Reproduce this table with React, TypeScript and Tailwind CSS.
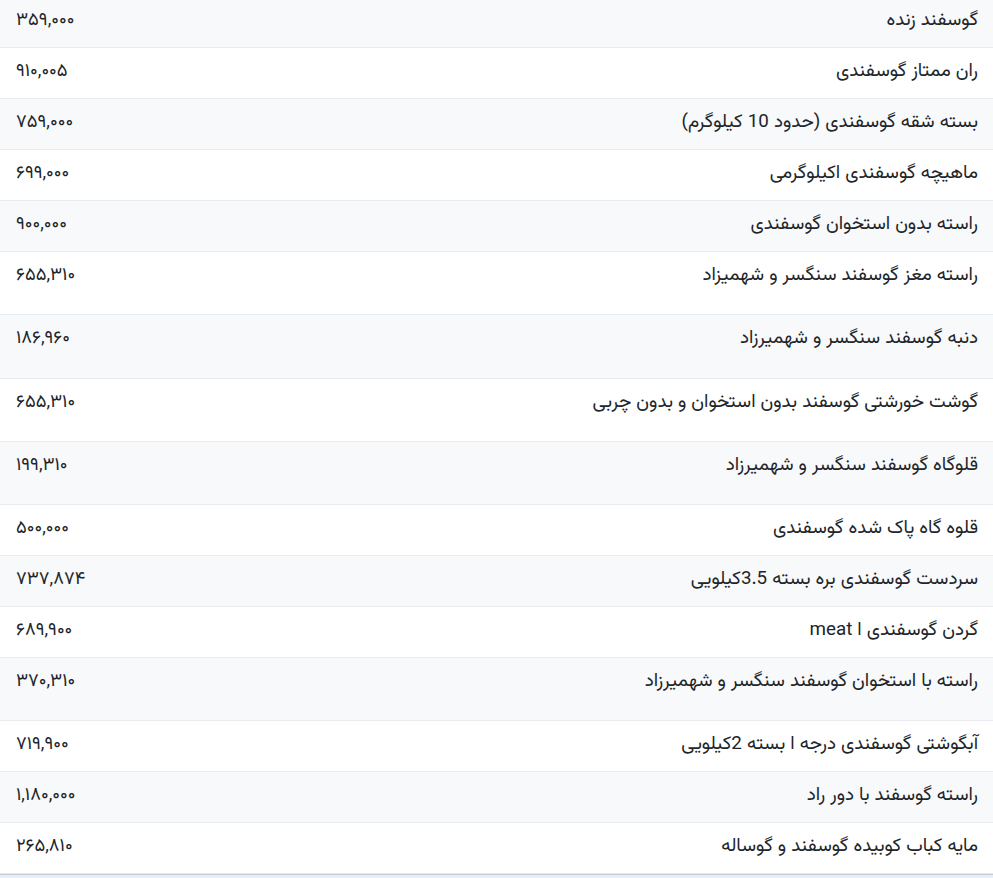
import React from "react";

type Row = { name: string; price: string; tall?: boolean };

const rows: Row[] = [
  { name: "گوسفند زنده", price: "۳۵۹,۰۰۰" },
  { name: "ران ممتاز گوسفندی", price: "۹۱۰,۰۰۵" },
  { name: "بسته شقه گوسفندی (حدود 10 کیلوگرم)", price: "۷۵۹,۰۰۰" },
  { name: "ماهیچه گوسفندی اکیلوگرمی", price: "۶۹۹,۰۰۰" },
  { name: "راسته بدون استخوان گوسفندی", price: "۹۰۰,۰۰۰" },
  { name: "راسته مغز گوسفند سنگسر و شهمیزاد", price: "۶۵۵,۳۱۰", tall: true },
  { name: "دنبه گوسفند سنگسر و شهمیرزاد", price: "۱۸۶,۹۶۰", tall: true },
  { name: "گوشت خورشتی گوسفند بدون استخوان و بدون چربی", price: "۶۵۵,۳۱۰", tall: true },
  { name: "قلوگاه گوسفند سنگسر و شهمیرزاد", price: "۱۹۹,۳۱۰", tall: true },
  { name: "قلوه گاه پاک شده گوسفندی", price: "۵۰۰,۰۰۰" },
  { name: "سردست گوسفندی بره بسته 3.5کیلویی", price: "۷۳۷,۸۷۴" },
  { name: "گردن گوسفندی ا meat", price: "۶۸۹,۹۰۰" },
  { name: "راسته با استخوان گوسفند سنگسر و شهمیرزاد", price: "۳۷۰,۳۱۰", tall: true },
  { name: "آبگوشتی گوسفندی درجه ا بسته 2کیلویی", price: "۷۱۹,۹۰۰" },
  { name: "راسته گوسفند با دور راد", price: "۱,۱۸۰,۰۰۰" },
  { name: "مایه کباب کوبیده گوسفند و گوساله", price: "۲۶۵,۸۱۰" },
];

export default function App() {
  return (
    <div
      className="min-h-[878px] w-full bg-[#e6eef8] overflow-hidden text-[#212529]"
      style={{ fontFamily: 'Vazirmatn, Vazir, Roboto, "Noto Sans Arabic", "DejaVu Sans", sans-serif' }}
    >
      <div className="-mt-[3px] bg-white border-b border-[#c3cbd6]" dir="rtl">
        {rows.map((r, i) => (
          <div
            key={i}
            className={`flex items-start justify-between border-b border-[#e9ecef] pt-[9px] ${
              r.tall ? "h-[63.25px]" : "h-[51px]"
            } ${i % 2 === 0 ? "bg-[#f8f9fb]" : "bg-white"}`}
          >
            <div className="pr-[15px] text-[18.8px] leading-[30px]">{r.name}</div>
            <div className="pl-[16px] text-[18.3px] leading-[30px]" dir="ltr">
              {r.price}
            </div>
          </div>
        ))}
      </div>
    </div>
  );
}
